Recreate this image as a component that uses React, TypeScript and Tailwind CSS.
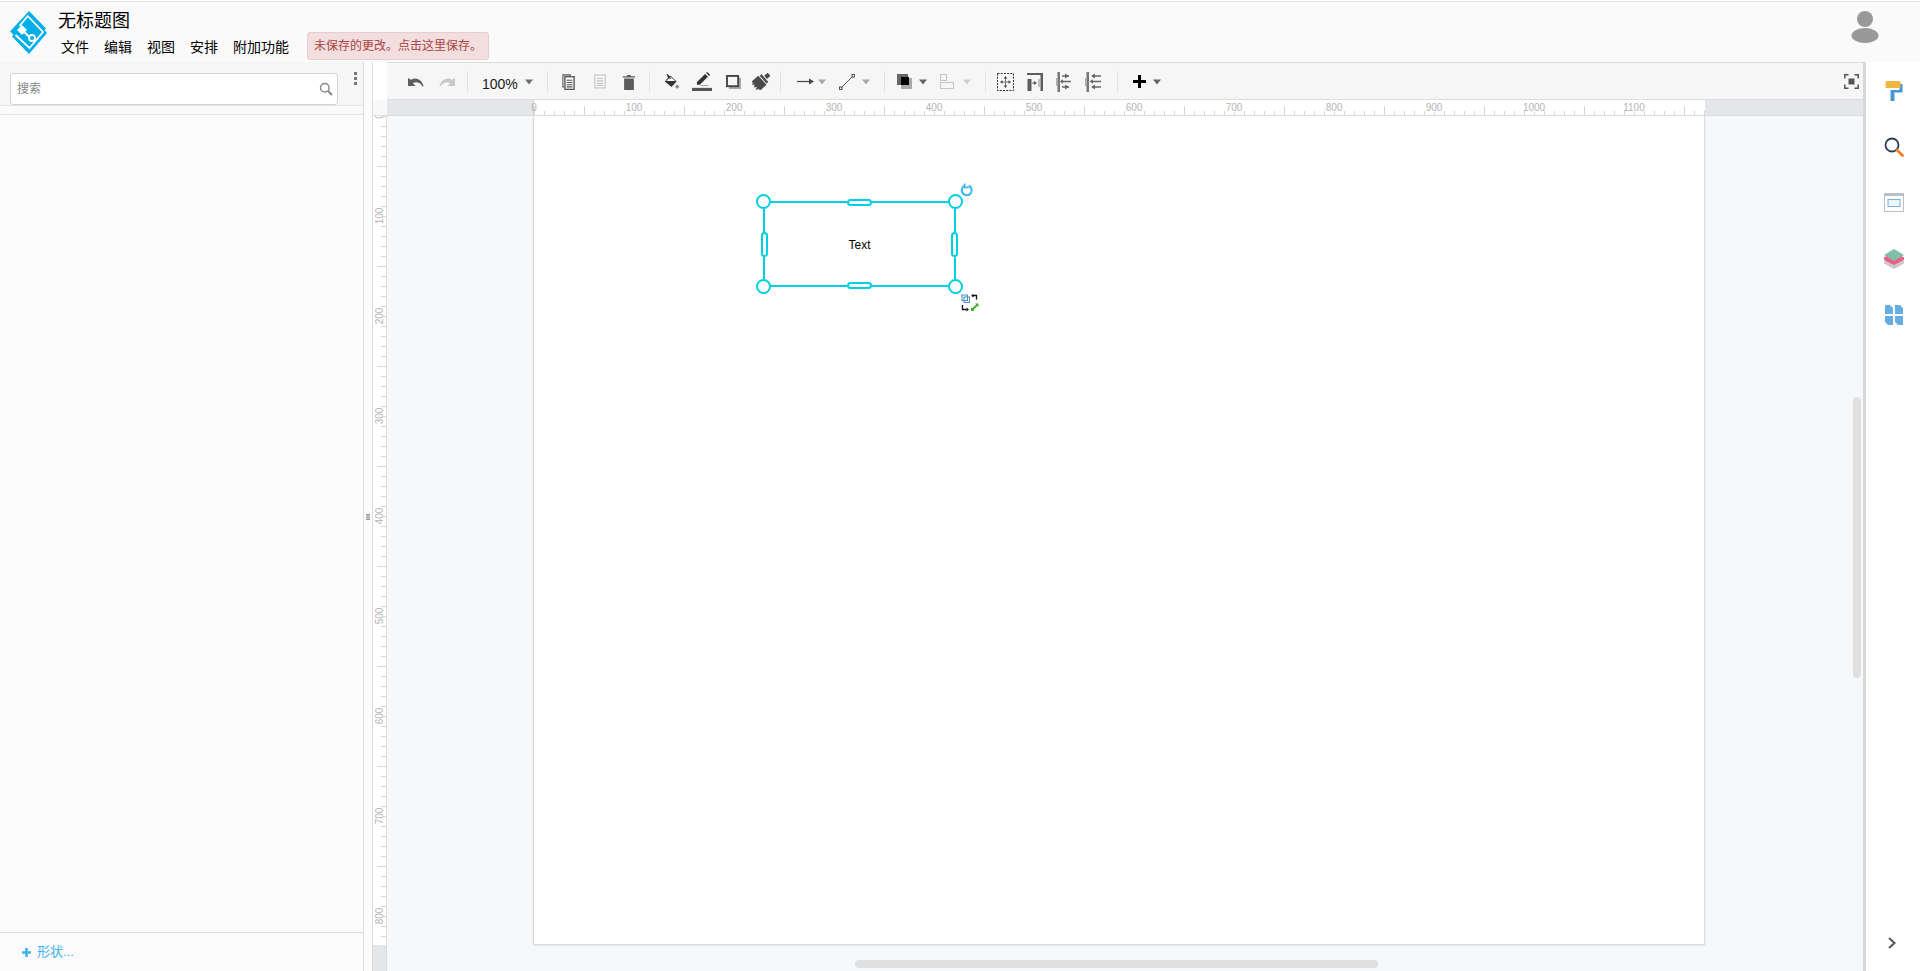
import React from "react";

const FONT = { fontFamily: '"Liberation Sans", "Noto Sans CJK SC", sans-serif' };

const hTicks: number[] = Array.from({ length: 118 }, (_, i) => i * 10);
const vTicks: number[] = Array.from({ length: 83 }, (_, i) => i * 10);

function Caret({ className }: { className: string }) {
  return (
    <svg width="10" height="6" viewBox="0 0 10 6" className={className}>
      <path d="M1 0.5h8L5 5.5z" fill="currentColor" />
    </svg>
  );
}

function Sep({ className }: { className: string }) {
  return <div className={`h-[22px] w-px shrink-0 bg-[#e4e4e4] ${className}`} />;
}

function Box({ className, children }: { className: string; children: React.ReactNode }) {
  return <div className={`flex h-full shrink-0 items-center justify-center ${className}`}>{children}</div>;
}

function Toolbar() {
  return (
    <div className="flex h-[38px] items-center border-t border-b border-[#dcdcdc] bg-[#f6f6f6] pl-[14px] pt-px text-[#707070]">
      <Box className="w-[30px]">
        <svg width="16" height="10" viewBox="0 0 16 10" fill="#5f5f5f"><path d="M0 1v8h7.500L4.800 6.300C8 4.300 12 5.300 14.500 9.500l1.200-.5C13.500 2.500 8 -.5 3 2.700z" /></svg>
      </Box>
      <Box className="w-[32px]">
        <svg width="16" height="10" viewBox="0 0 16 10" fill="#c8c8c8"><path d="M16 1v8H8.500l2.700-2.700C8 4.300 4 5.300 1.500 9.500L.3 9C2.500 2.500 8 -.5 13 2.700z" /></svg>
      </Box>
      <Sep className="ml-[4px]" />
      <div className="ml-[14px] w-[36px] shrink-0 pt-[5px] text-[14px] leading-none text-[#1a1a1a]">100%</div>
      <Caret className="ml-[6px] shrink-0 text-[#707070]" />
      <Sep className="ml-[13px]" />
      <Box className="ml-[6px] w-[28px]">
        <svg width="13" height="16" viewBox="0 0 14 18" fill="none" stroke="#555" strokeWidth="1.200">
          <path d="M2 14.500H.7V1H9v2" />
          <rect x="3" y="3" width="10.300" height="14.300" fill="#f6f6f6" strokeWidth="1.500" />
          <path d="M5 7h6.400M5 9.500h6.400M5 12h6.400M5 14.500h6.400" />
        </svg>
      </Box>
      <Box className="ml-[4px] w-[28px]">
        <svg width="12" height="15" viewBox="0 0 14 17" fill="none" stroke="#c4c4c4" strokeWidth="1.300">
          <rect x="1" y="1" width="12" height="15" />
          <path d="M3.500 5h7M3.500 7.800h7M3.500 10.500h7M3.500 13h7" />
        </svg>
      </Box>
      <Box className="ml-[1px] w-[28px]">
        <svg width="14" height="16" viewBox="0 0 15 18" fill="#5c5c5c"><path d="M2 5h11v13H2zM0.500 2.500H5L5.800 1h3.400l.8 1.500h4.500V4H.5z" /></svg>
      </Box>
      <Sep className="ml-[6px]" />
      <Box className="ml-[7px] w-[28px]">
        <svg width="17" height="16" viewBox="0 0 20 19">
          <path d="M4 0.500l1.200-.3 2.200 2.600L9 2l7 7-6 6.500L2 9 6 4.600z" fill="#333" />
          <path d="M3.800 8.200L9 3.200l5.300 5z" fill="#fff" />
          <path d="M5 .8l4 5" stroke="#333" strokeWidth="1.400" />
          <path d="M14.500 15h4.500M16.800 12.700v4.600" stroke="#888" strokeWidth="2" />
        </svg>
      </Box>
      <Box className="ml-[3px] w-[28px]">
        <svg width="21" height="19" viewBox="0 0 22 20">
          <path d="M5 13.500l.3-3L13.700 2l3 3-8.500 8.400z" fill="#333" />
          <path d="M14.800 1l1-1 3.200 3-1 1.100z" fill="#333" />
          <path d="M9 14.300h8" stroke="#999" strokeWidth="1" />
          <rect x="0" y="16.700" width="21" height="3.300" fill="#555" />
        </svg>
      </Box>
      <Box className="ml-[3px] w-[28px]">
        <svg width="15" height="14" viewBox="0 0 16 15">
          <rect x="3" y="3" width="13" height="12" fill="#a9a9a9" />
          <rect x="1" y="1" width="12" height="11" fill="#f6f6f6" stroke="#444" strokeWidth="2" />
        </svg>
      </Box>
      <Box className="w-[28px]">
        <svg width="18" height="17" viewBox="0 0 18 18" fill="#4a4a4a">
          <g transform="rotate(48 9 9)">
            <rect x="6.800" y="-2.500" width="4.400" height="5" />
            <rect x="3.500" y="3.500" width="11" height="2.500" />
            <path d="M2.500 7h13v10.500l-2-2-1.500 3.500-2-3-1.500 3-1.700-3-1.500 2.500-1-2.500-1.800 1.500z" />
          </g>
        </svg>
      </Box>
      <Sep className="ml-[5px]" />
      <Box className="ml-[12px] w-[24px]">
        <svg width="17" height="9" viewBox="0 0 17 9"><path d="M0 4.500h13" stroke="#444" strokeWidth="1.200" /><path d="M12 1.500l5 3-5 3z" fill="#444" /></svg>
      </Box>
      <Caret className="shrink-0 text-[#a8a8a8]" />
      <Box className="ml-[8px] w-[24px]">
        <svg width="16" height="16" viewBox="0 0 16 16" fill="none" stroke="#555" strokeWidth="1"><path d="M2.500 13.500L13.500 2.500" /><rect x="0.500" y="13" width="2.500" height="2.500" /><rect x="13" y="0.500" width="2.500" height="2.500" /></svg>
      </Box>
      <Caret className="ml-[2px] shrink-0 text-[#a8a8a8]" />
      <Sep className="ml-[13px]" />
      <Box className="ml-[7px] w-[24px]">
        <svg width="15" height="15" viewBox="0 0 15 15"><rect x="0" y="0" width="11" height="11" fill="#666" /><rect x="4" y="4" width="11" height="11" fill="#a9a9a9" /><rect x="4" y="3" width="8" height="8" fill="#000" /></svg>
      </Box>
      <Caret className="ml-[2px] shrink-0 text-[#666]" />
      <Box className="ml-[7px] w-[24px]">
        <svg width="14" height="15" viewBox="0 0 14 15" fill="none" stroke="#c4c4c4" strokeWidth="1"><rect x="0.500" y="0.500" width="6" height="6" /><rect x="0.500" y="8.500" width="13" height="6" /></svg>
      </Box>
      <Caret className="ml-[3px] shrink-0 text-[#d0d0d0]" />
      <Sep className="ml-[13px]" />
      <Box className="ml-[5px] w-[28px]">
        <svg width="17" height="18" viewBox="0 0 17 18">
          <rect x="0.500" y="0.500" width="16" height="17" fill="none" stroke="#333" strokeWidth="1" strokeDasharray="2 1.200" />
          <path d="M8.500 4v10M4 9h9" stroke="#777" strokeWidth="1" />
          <path d="M6.700 5.500l1.800-2.500 1.800 2.500zM6.700 12.500l1.800 2.500 1.800-2.500zM5.500 7.200L3 9l2.500 1.800zM11.500 7.200L14 9l-2.500 1.800z" fill="#444" />
        </svg>
      </Box>
      <Box className="ml-[2px] w-[28px]">
        <svg width="16" height="18" viewBox="0 0 16 18">
          <path d="M0 0h16v18h-2.500V2H0z" fill="#5c5c5c" />
          <rect x="0.500" y="6" width="4" height="12" fill="#5c5c5c" />
          <path d="M5 10h3" stroke="#777" strokeWidth="1.200" />
          <path d="M7 8l3 2-3 2z" fill="#555" />
          <rect x="11.500" y="6" width="1" height="8" fill="#888" />
        </svg>
      </Box>
      <Box className="ml-[1px] w-[28px]">
        <svg width="16" height="20" viewBox="0 0 16 20">
          <rect x="1.500" y="0" width="2.500" height="20" fill="#777" />
          <path d="M0 6h1.500v8H0z" fill="#aaa" />
          <path d="M6 4h7M6 15h7M7 9.500h8" stroke="#666" strokeWidth="1.400" />
          <path d="M9 1.500v5L13 4zM9 12.500v5l4-2.500zM7 7.300v4.500L3.800 9.500z" fill="#666" />
        </svg>
      </Box>
      <Box className="ml-[1px] w-[28px]">
        <svg width="16" height="20" viewBox="0 0 16 20">
          <rect x="1.500" y="0" width="2.500" height="20" fill="#777" />
          <path d="M0 6h1.500v8H0z" fill="#aaa" />
          <path d="M8 4h8M8 15h8M7 9.500h9" stroke="#666" strokeWidth="1.400" />
          <path d="M10 1.500v5L6 4zM10 12.500v5l-4-2.500zM8 7.300v4.500L4.500 9.500z" fill="#666" />
        </svg>
      </Box>
      <Sep className="ml-[10px]" />
      <Box className="ml-[9px] w-[24px]">
        <svg width="13" height="13" viewBox="0 0 13 13" fill="#000"><path d="M5 0h3v5h5v3H8v5H5V8H0V5h5z" /></svg>
      </Box>
      <Caret className="ml-[1px] shrink-0 text-[#666]" />
      <div className="ml-auto mr-[4px] flex h-[15px] w-[15px] shrink-0 items-center justify-center">
        <svg width="15" height="15" viewBox="0 0 15 15" fill="none" stroke="#555" strokeWidth="1.500">
          <path d="M0.800 4.500V0.800h3.700M10.500 0.800h3.700v3.700M14.200 10.500v3.700h-3.700M4.500 14.200H0.800v-3.700" />
          <rect x="4.500" y="4.500" width="6" height="6" fill="#555" stroke="none" />
        </svg>
      </div>
    </div>
  );
}

function HRuler() {
  return (
    <div className="relative flex h-[16px] shrink-0 border-b border-[#dcdcdc] bg-[#e5e6ea]">
      <svg width="1476" height="15" viewBox="0 0 1476 15" className="block" style={FONT}>
        <rect x="146" y="0" width="1172" height="15" fill="#ffffff" />
        <path d="M146.500 0v15" stroke="#d4d4d4" />
        {hTicks.map((t) => (
          <line
            key={t}
            x1={147.5 + t}
            x2={147.5 + t}
            y1={t % 50 === 0 ? 6 : 11}
            y2={15}
            stroke="#d6d6d6"
            strokeWidth="1"
          />
        ))}
        {hTicks
          .filter((t) => t % 100 === 0 && t > 0)
          .map((t) => (
            <rect key={`b${t}`} x={147 + t - 9} y="0" width="18" height="12" fill="#ffffff" />
          ))}
        {hTicks
          .filter((t) => t % 100 === 0)
          .map((t) => (
            <text key={`t${t}`} x={147 + t} y="11" textAnchor="middle" fontSize="10" fill="#b4b4b4">
              {t}
            </text>
          ))}
      </svg>
    </div>
  );
}

function VRuler() {
  return (
    <div className="flex w-[15px] shrink-0 flex-col border-l border-[#dcdcdc]">
      <div className="h-[38px] shrink-0 bg-white" />
      <div className="h-[16px] shrink-0 border-b border-[#e0e0e0] bg-[#f8f8f8]" />
      <div className="relative flex-1 overflow-hidden border-r border-[#dcdcdc] bg-[#e5e6ea]">
        <svg width="13" height="855" viewBox="0 0 13 855" className="block" style={FONT}>
          <rect x="0" y="0" width="13" height="829" fill="#ffffff" />
          {vTicks.map((t) => (
            <line key={t} x1={t % 50 === 0 ? 4 : 8} x2={13} y1={0.5 + t} y2={0.5 + t} stroke="#d6d6d6" strokeWidth="1" />
          ))}
          {vTicks
            .filter((t) => t % 100 === 0)
            .map((t) => (
              <rect key={`b${t}`} x="0" y={t - 9} width="10" height="18" fill="#ffffff" />
            ))}
          {vTicks
            .filter((t) => t % 100 === 0)
            .map((t) => (
              <text key={`t${t}`} transform={`translate(9.5 ${t}) rotate(-90)`} textAnchor="middle" fontSize="10" fill="#b4b4b4">
                {t}
              </text>
            ))}
        </svg>
      </div>
    </div>
  );
}

function Handle({ className }: { className: string }) {
  return <div className={`absolute h-[15px] w-[15px] rounded-full border-2 border-[#00d0e4] bg-white ${className}`} />;
}

function PillH({ className }: { className: string }) {
  return <div className={`absolute h-[7px] w-[25px] rounded-full border-2 border-[#00d0e4] bg-white ${className}`} />;
}

function PillV({ className }: { className: string }) {
  return <div className={`absolute h-[25px] w-[7px] rounded-full border-2 border-[#00d0e4] bg-white ${className}`} />;
}

function Selection() {
  return (
    <div className="absolute left-[229px] top-[85px] h-[86px] w-[193px] border-2 border-[#00d0e4]">
      <div className="flex h-full items-center justify-center pt-px text-[12px] text-black">Text</div>
      <Handle className="left-[-9px] top-[-9px]" />
      <Handle className="right-[-9px] top-[-9px]" />
      <Handle className="bottom-[-9px] left-[-9px]" />
      <Handle className="bottom-[-9px] right-[-9px]" />
      <PillH className="left-[82px] top-[-4px]" />
      <PillH className="bottom-[-4px] left-[82px]" />
      <PillV className="left-[-4px] top-[29px]" />
      <PillV className="right-[-4px] top-[29px]" />
      <svg width="14" height="14" viewBox="0 0 24 24" className="absolute right-[-20px] top-[-20px]" fill="none" stroke="#36b4f4" strokeWidth="3.500">
        <path d="M15 4.800A8.500 8.500 0 1 1 7.500 5" />
        <path d="M8 1v6.500h7" strokeWidth="2.800" fill="none" />
      </svg>
      <svg width="18" height="18" viewBox="0 0 18 18" className="absolute bottom-[-27px] right-[-25px]">
        <rect x="1" y="1" width="5.500" height="5.500" fill="none" stroke="#4a8cc0" strokeWidth="1" />
        <rect x="3" y="3" width="5.500" height="5.500" fill="none" stroke="#4a8cc0" strokeWidth="1" />
        <path d="M11 1.500h4.500v4" fill="none" stroke="#111" strokeWidth="1.300" />
        <path d="M12.500 0v3.500L10 1.700z" fill="#111" />
        <path d="M1.500 11v4.500h4" fill="none" stroke="#111" strokeWidth="1.300" />
        <path d="M5.500 13.500v4L8 15.500z" fill="#111" />
        <path d="M11 16l5-5" stroke="#3fae2a" strokeWidth="1.800" />
        <path d="M14 9.500h3.500V13zM10 13v4h3.500z" fill="#3fae2a" />
      </svg>
    </div>
  );
}

function RightPanel() {
  return (
    <div className="flex w-[57px] shrink-0 flex-col items-center border-l-[3px] border-[#d6d6dc] bg-white pl-[2px]">
      <div className="mt-[19px] flex flex-col items-center gap-[36px]">
        <svg width="20" height="20" viewBox="0 0 20 20">
          <path d="M15.500 3h3v8.500h-8V20H6.500V9h9z" fill="#4a97cf" />
          <rect x="1.500" y="0" width="15" height="7" rx="1" fill="#efb642" />
        </svg>
        <svg width="20" height="20" viewBox="0 0 20 20" fill="none">
          <circle cx="8" cy="8" r="6.500" stroke="#2c4058" strokeWidth="1.800" fill="#fafcff" />
          <path d="M13 13l5.500 5.500" stroke="#ee7d23" strokeWidth="2.800" strokeLinecap="round" />
        </svg>
        <svg width="20" height="20" viewBox="0 0 20 20">
          <rect x="0.500" y="0.500" width="19" height="18" fill="#fff" stroke="#bcbfc4" strokeWidth="1" />
          <rect x="0" y="0" width="20" height="3" fill="#bcbfc4" />
          <rect x="4" y="6.500" width="12" height="7" fill="#eef6fc" stroke="#74b2e0" strokeWidth="1" />
        </svg>
        <svg width="20" height="20" viewBox="0 0 20 20">
          <path d="M0 12.500L10 8l10 4.500v2L10 20 0 14.500z" fill="#c9c9c9" />
          <path d="M0 8.500L10 3l10 5.500v2.500L10 16 0 11z" fill="#ee5f85" />
          <path d="M0 6L10 0l10 6-10 6z" fill="#7fbfa6" />
        </svg>
        <svg width="18" height="20" viewBox="0 0 18 20" fill="#65ade3">
          <path d="M0 0h5l3 3v6H0zM10 0h5l3 3v6h-8zM0 11h8v9H3l-3-3zM10 11h8v9h-5l-3-3z" />
        </svg>
      </div>
      <svg width="12" height="14" viewBox="0 0 12 14" className="mb-[21px] mr-[5px] mt-auto" fill="none" stroke="#555" strokeWidth="2">
        <path d="M3 2l5.500 5L3 12" />
      </svg>
    </div>
  );
}

export default function App() {
  return (
    <div className="flex h-[971px] w-[1920px] flex-col overflow-hidden bg-white" style={FONT}>
      <header className="mt-px flex h-[61px] shrink-0 items-start border-t border-[#e3e3e3] bg-[#fafafa] pl-[10px]">
        <svg width="37" height="43" viewBox="0 0 37 43" className="mt-[9px] shrink-0">
          <path d="M19 0l17 17.500-1.500 1.500 2.500 3L19 43 2 25.500l1.500-2L0 20.500z" fill="#00aee8" />
          <path d="M9.500 15L17.700 5 33 21 19.500 37 5.500 24" fill="none" stroke="#fff" strokeWidth="1.800" />
          <path d="M7 19l5-5 5 5-5 5z" fill="#fff" />
          <path d="M14.300 21l5 5" stroke="#fff" strokeWidth="1.800" />
          <circle cx="22" cy="27" r="3" fill="#00aee8" stroke="#fff" strokeWidth="1.800" />
        </svg>
        <div className="ml-[11px] shrink-0">
          <div className="mt-[7px] h-[24px] text-[18px] leading-[24px] text-black">无标题图</div>
          <nav className="ml-[3px] mt-[4px] flex gap-[15px] text-[14px] leading-[20px] text-black">
            <span>文件</span>
            <span>编辑</span>
            <span>视图</span>
            <span>安排</span>
            <span>附加功能</span>
          </nav>
        </div>
        <div className="ml-[18px] mt-[30px] flex h-[28px] w-[182px] items-center rounded-[3px] border border-[#ebccd1] bg-[#f2dede] pl-[6px] text-[12px] text-[#a94442]">
          未保存的更改。点击这里保存。
        </div>
        <svg width="28" height="33" viewBox="0 0 28 33" className="ml-auto mr-[41px] mt-[9px] shrink-0" fill="#999">
          <circle cx="14" cy="8" r="8" />
          <ellipse cx="14" cy="24.500" rx="13.500" ry="7.500" />
        </svg>
      </header>

      <div className="flex min-h-0 flex-1">
        <aside className="flex w-[364px] shrink-0 flex-col border-r border-[#dcdcdc] bg-[#fbfbfb]">
          <div className="flex h-[43px] shrink-0 items-start bg-[#f6f6f6] pl-[10px] pt-[11px]">
            <div className="flex h-[32px] w-[328px] items-center justify-between rounded-[3px] border border-[#d4d4d4] bg-white pl-[6px] pr-[4px] text-[12px] text-[#888]">
              <span>搜索</span>
              <svg width="14" height="14" viewBox="0 0 14 14" fill="none" stroke="#8a8a8a">
                <circle cx="5.800" cy="5.800" r="4.300" strokeWidth="1.500" />
                <path d="M9 9l4 4" strokeWidth="2.200" />
              </svg>
            </div>
            <div className="ml-[16px] mt-[-1px] flex flex-col gap-[2px]">
              <div className="h-[3px] w-[3px] bg-[#777]" />
              <div className="h-[3px] w-[3px] bg-[#777]" />
              <div className="h-[3px] w-[3px] bg-[#777]" />
            </div>
          </div>
          <div className="h-[10px] shrink-0 border-t border-b border-[#e4e4e4] bg-[#fafafa]" />
          <div className="flex-1" />
          <div className="flex h-[39px] shrink-0 items-center border-t border-[#dcdcdc] pl-[22px] text-[13px] text-[#3eb4e8]">
            <svg width="9" height="9" viewBox="0 0 9 9" fill="#3eb4e8" className="mr-[6px]"><path d="M3.200 0h2.600v3.200H9v2.600H5.800V9H3.200V5.800H0V3.200h3.200z" /></svg>
            <span>形状...</span>
          </div>
        </aside>

        <div className="flex w-[8px] shrink-0 items-center justify-center bg-[#fcfcfc]">
          <div className="h-[6px] w-[4px] border-y border-[#999] bg-[#bbb]" />
        </div>

        <VRuler />

        <div className="flex min-w-0 flex-1 flex-col">
          <Toolbar />
          <HRuler />
          <div className="relative flex-1 overflow-hidden bg-[#f7f8fa] pl-[146px]">
            <div className="relative h-[829px] w-[1172px] border border-t-0 border-[#dcdcdc] bg-white shadow-[0_1px_2px_rgba(0,0,0,0.08)]">
              <Selection />
            </div>
            <div className="absolute right-[2px] top-[281px] h-[281px] w-[8px] rounded-full bg-[#e0e0e0]" />
            <div className="absolute bottom-[3px] left-[468px] h-[8px] w-[523px] rounded-full bg-[#e0e0e0]" />
          </div>
        </div>

        <RightPanel />
      </div>
    </div>
  );
}
